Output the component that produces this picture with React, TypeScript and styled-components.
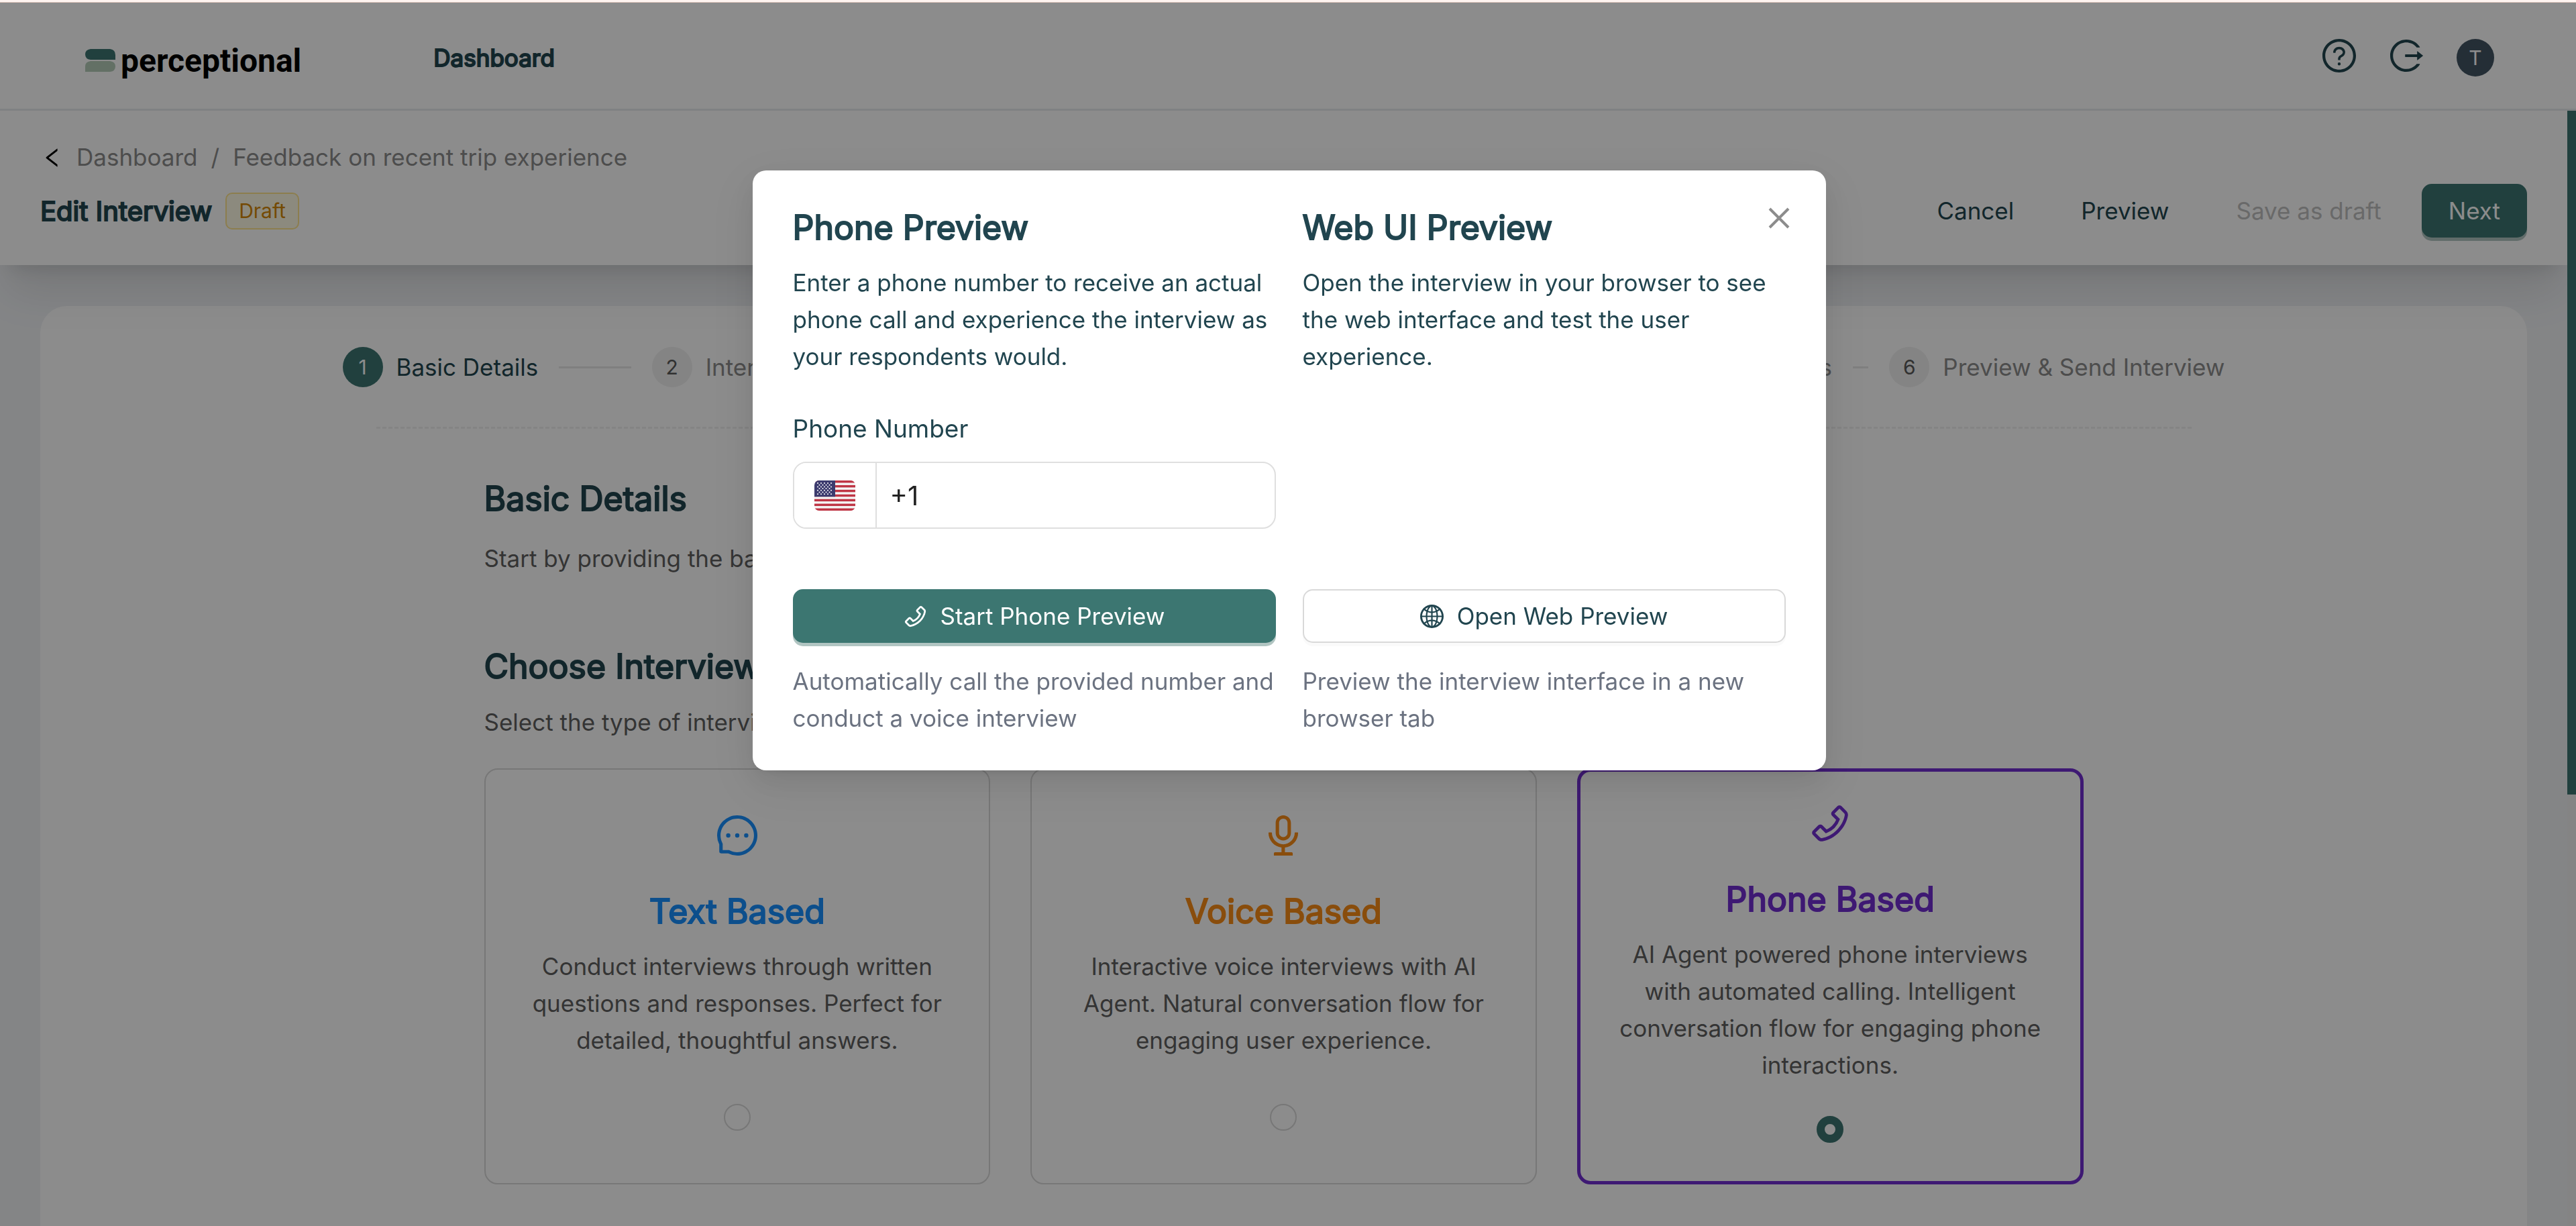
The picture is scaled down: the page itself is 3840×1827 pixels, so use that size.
import React from "react";
import styled, { createGlobalStyle, css } from "styled-components";
import {
  AiOutlineAudio,
  AiOutlineGlobal,
  AiOutlineLeft,
  AiOutlineLogout,
  AiOutlineMessage,
  AiOutlinePhone,
  AiOutlineQuestionCircle,
} from "react-icons/ai";

const teal = "#3c7671";
const ink = "#21454f";
const tightBox = "64 64 896 896";

const Global = createGlobalStyle`
  *, *::before, *::after { box-sizing: border-box; }
  body {
    margin: 0;
    font-family: Inter, "Noto Sans", sans-serif;
    font-size: 35px;
    line-height: 55px;
    color: ${ink};
  }
  h1, h2, h3, p, ol, nav { margin: 0; padding: 0; }
  button, input { font: inherit; color: inherit; }
  svg { display: block; }
`;

const heavy = css`
  font-weight: 400;
  -webkit-text-stroke: 2px currentColor;
`;

const Shell = styled.div`
  display: flex;
  flex-direction: column;
  height: 100vh;
  overflow: hidden;
  background: #f0f2f5;
`;

const TopStrip = styled.div`
  flex: none;
  height: 4px;
  background: #fff4f0;
  border-bottom: 1px solid #d9c0b8;
`;

const AppHeader = styled.header`
  flex: none;
  display: flex;
  align-items: center;
  height: 161px;
  padding: 6px 122px 0 127px;
  background: #ffffff;
  border-bottom: 3px solid #e8ebee;
`;

const Brand = styled.a`
  display: flex;
  align-items: center;
  gap: 7px;
  padding-top: 8px;
  font-family: Roboto, sans-serif;
  font-size: 48px;
  font-weight: 700;
  color: #000000;
  text-decoration: none;
`;

const NavLink = styled.a`
  ${heavy}
  margin-left: 197px;
  color: ${ink};
  text-decoration: none;
`;

const HeaderTools = styled.div`
  display: flex;
  align-items: center;
  gap: 50px;
  margin-left: auto;
`;

const IconButton = styled.button`
  display: flex;
  padding: 0 0 6px;
  border: 0;
  background: none;
  font-size: 50px;
`;

const Avatar = styled.span`
  display: flex;
  align-items: center;
  justify-content: center;
  width: 56px;
  height: 56px;
  border-radius: 50%;
  background: #425563;
  color: #ffffff;
  font-size: 30px;
`;

const Body = styled.div`
  flex: 1;
  min-height: 0;
  display: flex;
`;

const Content = styled.div`
  flex: 1;
  min-width: 0;
  overflow: hidden;
`;

const ScrollTrack = styled.div`
  flex: none;
  width: 13px;
  background: #f1f1f1;
`;

const ScrollThumb = styled.div`
  height: 61.3%;
  background: ${teal};
`;

const SubHeader = styled.div`
  position: relative;
  z-index: 1;
  display: flex;
  align-items: flex-end;
  justify-content: space-between;
  padding: 42px 60px 41px;
  background: #ffffff;
  box-shadow: 0 50px 62px -12px rgba(0, 0, 0, 0.1), 0 20px 25px -15px rgba(0, 0, 0, 0.1);
`;

const Breadcrumb = styled.nav`
  display: flex;
  align-items: center;
  gap: 20px;
  color: #8c8c8c;

  a {
    color: inherit;
    text-decoration: none;
  }
`;

const BackButton = styled.button`
  display: flex;
  padding: 0 0 0 2px;
  border: 0;
  background: none;
  color: #000000;
  font-size: 32px;
`;

const TitleRow = styled.div`
  display: flex;
  align-items: center;
  gap: 20px;
  min-height: 80px;
  margin-top: 12px;
`;

const PageTitle = styled.h1`
  ${heavy}
  font-size: 40px;
  line-height: 55px;
`;

const Tag = styled.span`
  padding: 0 18px;
  border: 2px solid #ffe58f;
  border-radius: 10px;
  background: #fffbe6;
  color: #d48806;
  font-size: 30px;
  line-height: 51px;
`;

const Actions = styled.div`
  display: flex;
  gap: 20px;
`;

const Button = styled.button<{ $kind?: "primary" | "outline" | "text" }>`
  display: flex;
  align-items: center;
  justify-content: center;
  gap: 20px;
  height: 80px;
  padding: 0 38px;
  border: 2px solid transparent;
  border-radius: 15px;
  background: transparent;
  color: ${ink};

  &:disabled {
    color: #bfbfbf;
  }

  ${(p) =>
    p.$kind === "primary" &&
    css`
      background: ${teal};
      color: #ffffff;
      box-shadow: 0 5px 0 #b1c5c2;
    `}

  ${(p) =>
    p.$kind === "outline" &&
    css`
      background: #ffffff;
      border-color: #d9d9d9;
      box-shadow: 0 5px 0 #fafafa;
    `}
`;

const Card = styled.main`
  margin: 61px 60px 0;
  padding: 61px 60px 120px;
  border-radius: 40px;
  background: #ffffff;
`;

const Steps = styled.ol`
  display: flex;
  width: 100%;
  max-width: 2806px;
  margin: 0 auto;
  list-style: none;
`;

const Step = styled.li<{ $active?: boolean }>`
  flex: 1;
  min-width: 0;
  display: flex;
  align-items: center;
  gap: 20px;
  padding-right: 31px;
  white-space: nowrap;
  color: ${(p) => (p.$active ? ink : "#8c8c8c")};

  &::after {
    content: "";
    flex: 1;
    height: 3px;
    margin-left: 11px;
    background: #e8e8e8;
  }

  &:last-child {
    flex: none;
    padding-right: 0;
  }

  &:last-child::after {
    content: none;
  }
`;

const StepDot = styled.span<{ $active?: boolean }>`
  flex: none;
  width: 60px;
  height: 60px;
  border-radius: 50%;
  background: ${(p) => (p.$active ? teal : "#f0f0f0")};
  color: ${(p) => (p.$active ? "#ffffff" : "#595959")};
  font-size: 30px;
  line-height: 60px;
  text-align: center;
`;

const Rule = styled.hr`
  width: 100%;
  max-width: 2706px;
  margin: 59px auto 0;
  border: 0;
  border-top: 3px dashed #f0f0f0;
`;

const Form = styled.div`
  width: 100%;
  max-width: 2384px;
  margin: 69px auto 0;
`;

const Heading = styled.h2`
  ${heavy}
  font-size: 50px;
  line-height: 70px;
`;

const Hint = styled.p<{ $gap: number }>`
  margin-top: ${(p) => p.$gap}px;
  color: #606060;
`;

const Section = styled.section`
  & + & {
    margin-top: 98px;
  }
`;

const Options = styled.div`
  display: grid;
  grid-template-columns: repeat(3, 1fr);
  gap: 60px;
  margin-top: 41px;
`;

const Option = styled.label<{ $tone: string; $selected?: boolean }>`
  display: flex;
  flex-direction: column;
  align-items: center;
  justify-content: center;
  padding: 47px;
  border: ${(p) => (p.$selected ? `5px solid ${p.$tone}` : "2px solid #d9d9d9")};
  border-radius: 20px;
  text-align: center;

  > svg {
    font-size: 60px;
    color: ${(p) => p.$tone};
  }
`;

const OptionTitle = styled.h3<{ $tone: string }>`
  ${heavy}
  margin-top: 48px;
  font-size: 50px;
  line-height: 70px;
  color: ${(p) => p.$tone};
`;

const OptionText = styled.p`
  min-height: 184px;
  margin-top: 20px;
  color: #606060;
`;

const Radio = styled.input`
  appearance: none;
  width: 40px;
  height: 40px;
  margin: 48px 0 10px;
  border: 2px solid #d9d9d9;
  border-radius: 50%;
  background: #ffffff;

  &:checked {
    border: 12px solid ${teal};
  }
`;

const Mask = styled.div`
  position: fixed;
  inset: 4px 0 0;
  z-index: 10;
  display: flex;
  align-items: flex-start;
  justify-content: center;
  padding: 250px 0 0 3px;
  background: rgba(0, 0, 0, 0.45);
`;

const Modal = styled.div`
  position: relative;
  display: grid;
  grid-template-columns: repeat(2, minmax(0, 1fr));
  column-gap: 40px;
  width: 1600px;
  max-width: 100%;
  padding: 50px 60px;
  border-radius: 20px;
  background: #ffffff;
  box-shadow: 0 15px 40px rgba(0, 0, 0, 0.08), 0 8px 15px -10px rgba(0, 0, 0, 0.12),
    0 22px 70px 20px rgba(0, 0, 0, 0.05);
`;

const Pane = styled.section`
  display: flex;
  flex-direction: column;

  > button {
    margin-top: auto;
  }
`;

const ModalText = styled.p`
  margin-top: 20px;
`;

const Field = styled.div`
  margin: 52px 0 90px;

  label {
    display: block;
    font-size: 37px;
  }
`;

const PhoneBox = styled.div`
  display: flex;
  height: 100px;
  margin-top: 22px;
  border: 2px solid #dfdfdf;
  border-radius: 20px;
  overflow: hidden;
`;

const FlagButton = styled.button`
  flex: none;
  display: flex;
  align-items: center;
  justify-content: center;
  width: 123px;
  padding: 0;
  border: 0;
  border-right: 2px solid #dfdfdf;
  background: #ffffff;
`;

const PhoneInput = styled.input`
  flex: 1;
  min-width: 0;
  padding: 0 20px;
  border: 0;
  outline: 0;
  background: transparent;
  color: #222222;
  font-size: 40px;
`;

const Note = styled.p`
  margin-top: 30px;
  color: #6b7280;
`;

const CloseButton = styled.button`
  position: absolute;
  top: 51px;
  right: 50px;
  display: flex;
  padding: 0;
  border: 0;
  background: none;
  color: #8c8c8c;
`;

const LogoMark = () => (
  <svg width="46" height="34" viewBox="0 0 46 34" aria-hidden="true">
    <path d="M8 0H37Q45 1 45 9V16H8Q0 15 0 8Q0 1 8 0Z" fill="#3c7671" />
    <path d="M8 18H37Q45 19 45 26Q45 33 37 34H0V26Q0 19 8 18Z" fill="#b4ccb9" />
  </svg>
);

const Flag = () => (
  <svg width="61" height="45" viewBox="0 0 61 45" aria-hidden="true">
    <clipPath id="flag-corners">
      <rect width="61" height="45" rx="7" />
    </clipPath>
    <g clipPath="url(#flag-corners)">
      <rect width="61" height="45" fill="#f5f5f5" />
      {[0, 1, 2, 3, 4, 5, 6].map((i) => (
        <rect key={i} y={(i * 90) / 13} width="61" height={45 / 13} fill="#bf3545" />
      ))}
      <rect width="31" height={(45 * 7) / 13} fill="#3c3b6e" />
      {Array.from({ length: 7 }, (_, row) =>
        Array.from({ length: row % 2 ? 4 : 5 }, (_, col) => (
          <circle
            key={`${row}-${col}`}
            cx={5 + col * 5 + (row % 2 ? 2.5 : 0)}
            cy={4 + row * 2.7}
            r="1"
            fill="#ffffff"
          />
        )),
      )}
    </g>
  </svg>
);

const steps = [
  "Basic Details",
  "Interview Guide",
  "Participants",
  "Branding",
  "Interview Settings",
  "Preview & Send Interview",
];

const options = [
  {
    title: "Text Based",
    tone: "#1890ff",
    icon: AiOutlineMessage,
    text: "Conduct interviews through written questions and responses. Perfect for detailed, thoughtful answers.",
  },
  {
    title: "Voice Based",
    tone: "#fa8c16",
    icon: AiOutlineAudio,
    text: "Interactive voice interviews with AI Agent. Natural conversation flow for engaging user experience.",
  },
  {
    title: "Phone Based",
    tone: "#722ed1",
    icon: AiOutlinePhone,
    text: "AI Agent powered phone interviews with automated calling. Intelligent conversation flow for engaging phone interactions.",
    selected: true,
  },
];

export default function App() {
  return (
    <>
      <Global />
      <Shell>
        <TopStrip />
        <AppHeader>
          <Brand href="#">
            <LogoMark />
            perceptional
          </Brand>
          <NavLink href="#">Dashboard</NavLink>
          <HeaderTools>
            <IconButton aria-label="Help">
              <AiOutlineQuestionCircle viewBox={tightBox} />
            </IconButton>
            <IconButton aria-label="Log out">
              <AiOutlineLogout viewBox={tightBox} />
            </IconButton>
            <Avatar>T</Avatar>
          </HeaderTools>
        </AppHeader>

        <Body>
          <Content>
            <SubHeader>
              <div>
                <Breadcrumb>
                  <BackButton aria-label="Back">
                    <AiOutlineLeft viewBox={tightBox} />
                  </BackButton>
                  <a href="#">Dashboard</a>
                  <span>/</span>
                  <span>Feedback on recent trip experience</span>
                </Breadcrumb>
                <TitleRow>
                  <PageTitle>Edit Interview</PageTitle>
                  <Tag>Draft</Tag>
                </TitleRow>
              </div>
              <Actions>
                <Button>Cancel</Button>
                <Button>Preview</Button>
                <Button disabled>Save as draft</Button>
                <Button $kind="primary">Next</Button>
              </Actions>
            </SubHeader>

            <Card>
              <Steps>
                {steps.map((name, i) => (
                  <Step key={name} $active={i === 0}>
                    <StepDot $active={i === 0}>{i + 1}</StepDot>
                    {name}
                  </Step>
                ))}
              </Steps>
              <Rule />
              <Form>
                <Section>
                  <Heading>Basic Details</Heading>
                  <Hint $gap={27}>Start by providing the basic details</Hint>
                </Section>
                <Section>
                  <Heading>Choose Interview Type</Heading>
                  <Hint $gap={21}>Select the type of interview</Hint>
                  <Options>
                    {options.map(({ title, tone, icon: Icon, text, selected }) => (
                      <Option key={title} $tone={tone} $selected={selected}>
                        <Icon viewBox={tightBox} />
                        <OptionTitle $tone={tone}>{title}</OptionTitle>
                        <OptionText>{text}</OptionText>
                        <Radio type="radio" name="interview-type" defaultChecked={selected} />
                      </Option>
                    ))}
                  </Options>
                </Section>
              </Form>
            </Card>
          </Content>
          <ScrollTrack>
            <ScrollThumb />
          </ScrollTrack>
        </Body>
      </Shell>

      <Mask>
        <Modal role="dialog" aria-label="Preview">
          <Pane>
            <Heading>Phone Preview</Heading>
            <ModalText>
              Enter a phone number to receive an actual phone call and experience the interview as
              your respondents would.
            </ModalText>
            <Field>
              <label htmlFor="phone">Phone Number</label>
              <PhoneBox>
                <FlagButton aria-label="Country: United States">
                  <Flag />
                </FlagButton>
                <PhoneInput id="phone" type="tel" defaultValue="+1" />
              </PhoneBox>
            </Field>
            <Button $kind="primary">
              <AiOutlinePhone viewBox={tightBox} />
              Start Phone Preview
            </Button>
            <Note>Automatically call the provided number and conduct a voice interview</Note>
          </Pane>
          <Pane>
            <Heading>Web UI Preview</Heading>
            <ModalText>
              Open the interview in your browser to see the web interface and test the user
              experience.
            </ModalText>
            <Button $kind="outline">
              <AiOutlineGlobal viewBox={tightBox} />
              Open Web Preview
            </Button>
            <Note>Preview the interview interface in a new browser tab</Note>
          </Pane>
          <CloseButton aria-label="Close">
            <svg width="40" height="40" viewBox="0 0 40 40" aria-hidden="true">
              <path d="M6 6L34 34M34 6L6 34" stroke="currentColor" strokeWidth="4" fill="none" />
            </svg>
          </CloseButton>
        </Modal>
      </Mask>
    </>
  );
}
